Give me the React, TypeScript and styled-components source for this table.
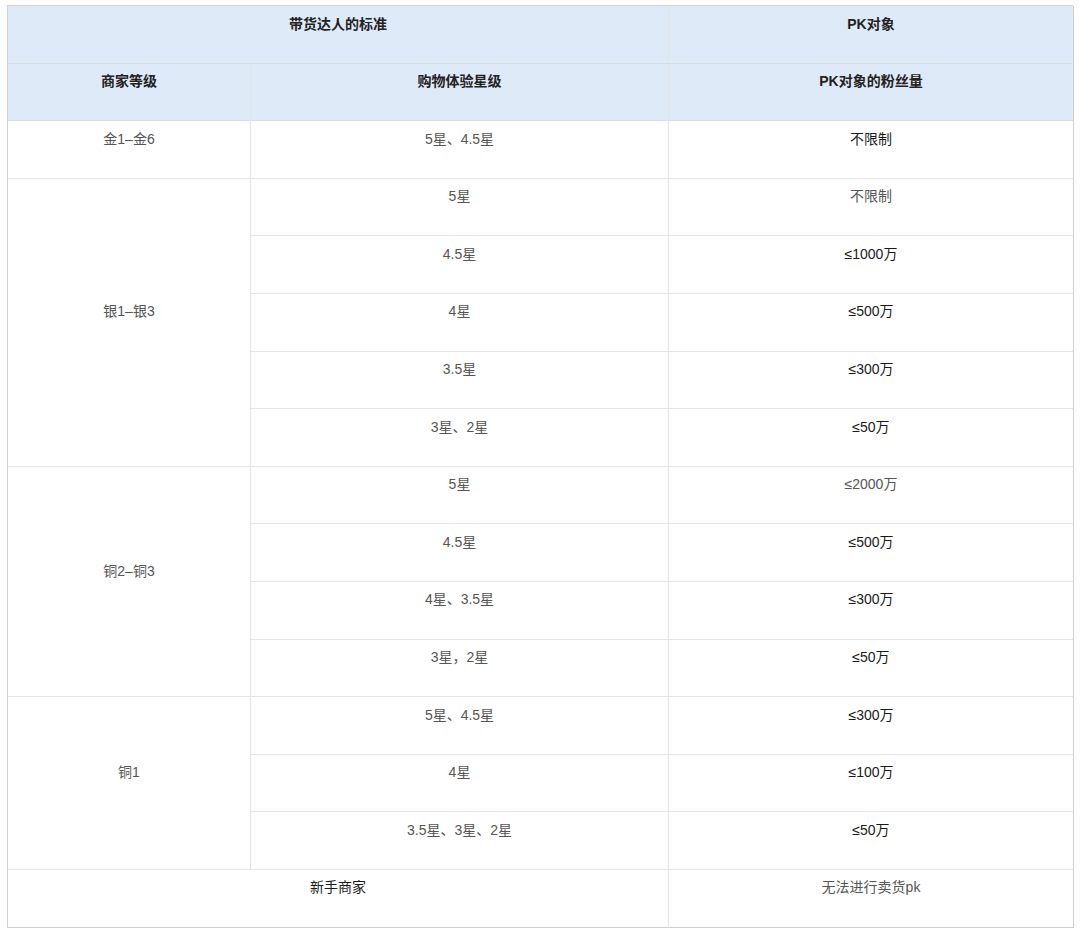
import React from "react";
import styled, { createGlobalStyle } from "styled-components";

const Global = createGlobalStyle`
  html, body { margin: 0; padding: 0; background: #ffffff; }
  body { font-family: "Liberation Sans", "Noto Sans CJK SC", sans-serif; }
`;

const Page = styled.div`
  padding: 5px 0 0 7px;
  width: 1080px;
  height: 934px;
  box-sizing: border-box;
`;

const Grid = styled.div`
  display: grid;
  grid-template-columns: 243px 418px 405px;
  grid-auto-rows: 57.6px;
  width: 1066px;
  border-top: 1px solid #d2d2d2;
  border-left: 1px solid #d2d2d2;
  box-sizing: border-box;
`;

type CellProps = {
  $head?: boolean;
  $dark?: boolean;
  $cols?: number;
  $rows?: number;
  $lastCol?: boolean;
  $lastRow?: boolean;
};

const Cell = styled.div<CellProps>`
  grid-column: span ${(p) => p.$cols ?? 1};
  grid-row: span ${(p) => p.$rows ?? 1};
  display: flex;
  align-items: center;
  justify-content: center;
  box-sizing: border-box;
  padding: 8px 8px 29.6px;
  background: ${(p) => (p.$head ? "#dfeaf8" : "#ffffff")};
  border-right: 1px solid ${(p) => (p.$lastCol ? "#cfcfcf" : "#e4e4e4")};
  border-bottom: 1px solid ${(p) => (p.$lastRow ? "#cfcfcf" : p.$head ? "#d8dde4" : "#e4e4e4")};
  font-size: 14px;
  line-height: 20px;
  font-weight: ${(p) => (p.$head ? 700 : 400)};
  color: ${(p) => (p.$head ? "#222" : p.$dark ? "#1a1a1a" : "#555")};
  white-space: nowrap;
`;

type Row = { text: string; dark?: boolean; head?: boolean; cols?: number; rows?: number; last?: boolean };

const groups: { label: string; rows: [string, string, boolean][] }[] = [
  { label: "金1–金6", rows: [["5星、4.5星", "不限制", true]] },
  {
    label: "银1–银3",
    rows: [
      ["5星", "不限制", false],
      ["4.5星", "≤1000万", true],
      ["4星", "≤500万", true],
      ["3.5星", "≤300万", true],
      ["3星、2星", "≤50万", true],
    ],
  },
  {
    label: "铜2–铜3",
    rows: [
      ["5星", "≤2000万", false],
      ["4.5星", "≤500万", true],
      ["4星、3.5星", "≤300万", true],
      ["3星，2星", "≤50万", true],
    ],
  },
  {
    label: "铜1",
    rows: [
      ["5星、4.5星", "≤300万", true],
      ["4星", "≤100万", true],
      ["3.5星、3星、2星", "≤50万", true],
    ],
  },
];

export default function App() {
  return (
    <Page>
      <Global />
      <Grid>
        <Cell $head $cols={2}>带货达人的标准</Cell>
        <Cell $head $lastCol>PK对象</Cell>
        <Cell $head>商家等级</Cell>
        <Cell $head>购物体验星级</Cell>
        <Cell $head $lastCol>PK对象的粉丝量</Cell>
        {groups.map((g) => (
          <React.Fragment key={g.label}>
            <Cell $rows={g.rows.length}>{g.label}</Cell>
            {g.rows.map(([star, fans, dark], i) => (
              <React.Fragment key={i}>
                <Cell>{star}</Cell>
                <Cell $dark={dark} $lastCol>{fans}</Cell>
              </React.Fragment>
            ))}
          </React.Fragment>
        ))}
        <Cell $cols={2} $dark $lastRow>新手商家</Cell>
        <Cell $lastCol $lastRow>无法进行卖货pk</Cell>
      </Grid>
    </Page>
  );
}
